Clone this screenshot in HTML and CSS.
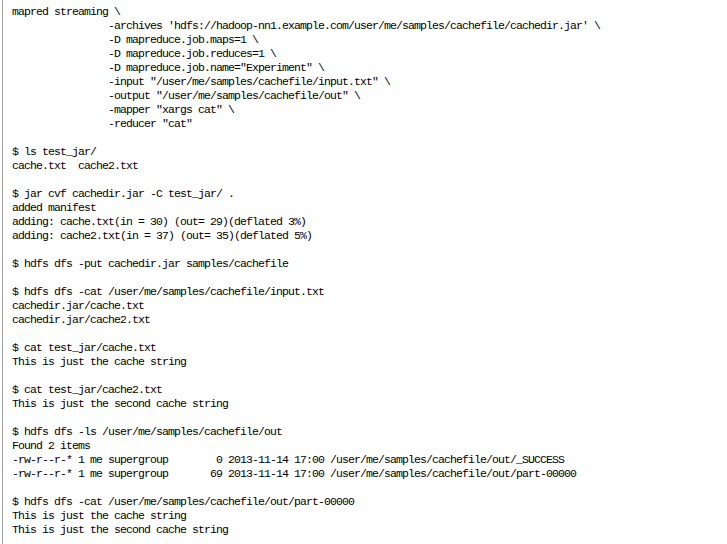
FILE: index.html
```html
<!DOCTYPE html>
<html>
<head>
<meta charset="utf-8">
<link rel="stylesheet" href="styles.css">
</head>
<body>
<div class="frame"><pre class="code">mapred streaming \
                -archives 'hdfs://hadoop-nn1.example.com/user/me/samples/cachefile/cachedir.jar' \
                -D mapreduce.job.maps=1 \
                -D mapreduce.job.reduces=1 \
                -D mapreduce.job.name="Experiment" \
                -input "/user/me/samples/cachefile/input.txt" \
                -output "/user/me/samples/cachefile/out" \
                -mapper "xargs cat" \
                -reducer "cat"

$ ls test_jar/
cache.txt  cache2.txt

$ jar cvf cachedir.jar -C test_jar/ .
added manifest
adding: cache.txt(in = 30) (out= 29)(deflated 3%)
adding: cache2.txt(in = 37) (out= 35)(deflated 5%)

$ hdfs dfs -put cachedir.jar samples/cachefile

$ hdfs dfs -cat /user/me/samples/cachefile/input.txt
cachedir.jar/cache.txt
cachedir.jar/cache2.txt

$ cat test_jar/cache.txt
This is just the cache string

$ cat test_jar/cache2.txt
This is just the second cache string

$ hdfs dfs -ls /user/me/samples/cachefile/out
Found 2 items
-rw-r--r-* 1 me supergroup        0 2013-11-14 17:00 /user/me/samples/cachefile/out/_SUCCESS
-rw-r--r-* 1 me supergroup       69 2013-11-14 17:00 /user/me/samples/cachefile/out/part-00000

$ hdfs dfs -cat /user/me/samples/cachefile/out/part-00000
This is just the cache string
This is just the second cache string</pre></div>
</body>
</html>
```

FILE: styles.css
```css
html, body {
  margin: 0;
  padding: 0;
  background: #ffffff;
}

body {
  padding-left: 2px;
}

.frame {
  border-left: 1px solid #a0a0a0;
  min-height: 544px;
  box-sizing: border-box;
  padding: 5px 0 0 9px;
}

.code {
  margin: 0;
  font-family: "Liberation Mono", "DejaVu Sans Mono", monospace;
  font-size: 11.5px;
  letter-spacing: -0.9px;
  line-height: 14px;
  color: #000000;
  white-space: pre;
}
```
